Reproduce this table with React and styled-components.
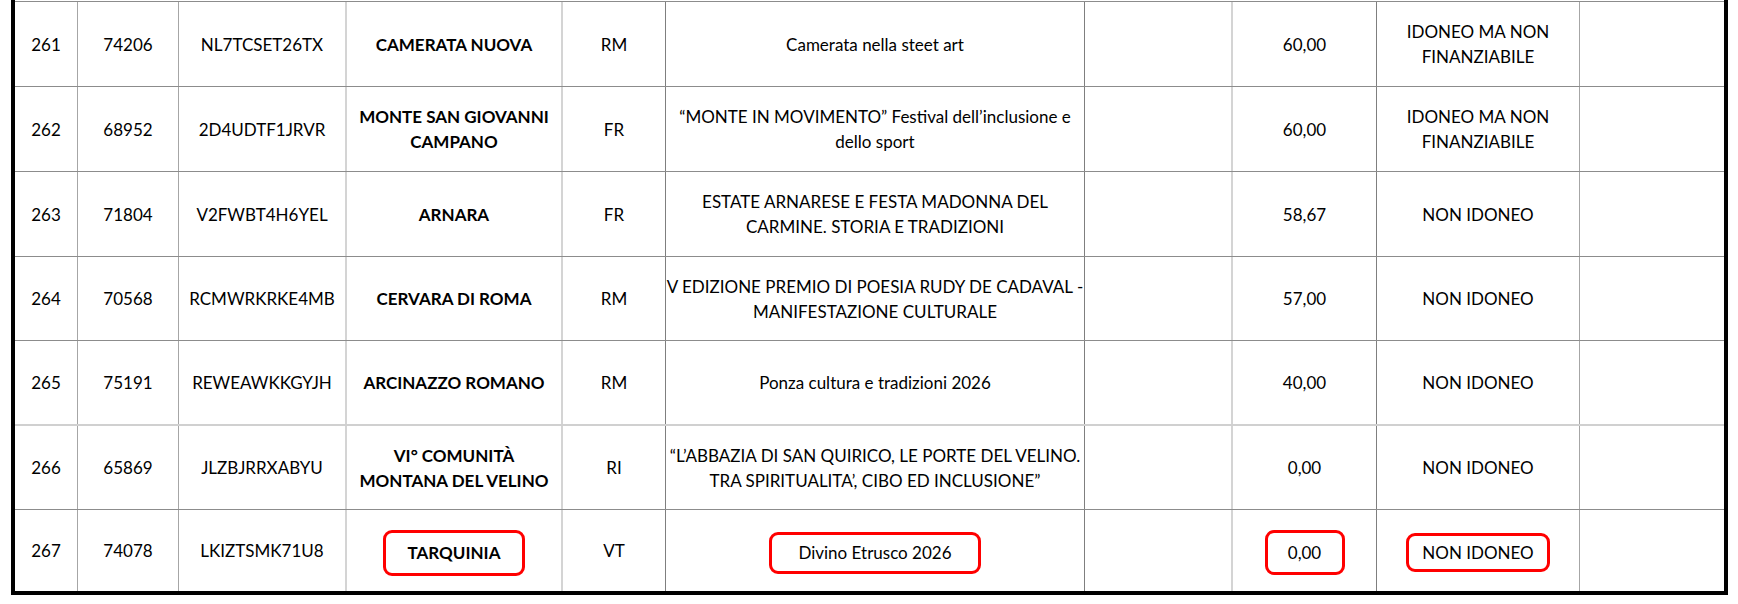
import React from "react";
import styled, { createGlobalStyle, css } from "styled-components";

const GlobalStyle = createGlobalStyle`
  html, body {
    margin: 0;
    padding: 0;
    background: #ffffff;
  }
  body {
    font-family: Lato, "Open Sans", "Liberation Sans", sans-serif;
    color: #000000;
  }
`;

// column widths include the left grid line of each cell
const columns = [
  { width: 62, line: "none" },
  { width: 101, line: "mid" },
  { width: 167, line: "mid" },
  { width: 216, line: "light" },
  { width: 104, line: "light" },
  { width: 419, line: "dark" },
  { width: 147, line: "dark" },
  { width: 145, line: "light" },
  { width: 203, line: "dark" },
  { width: 145, line: "mid" },
];

const lines = {
  none: css`
    border-left: 0;
  `,
  dark: css`
    border-left: 1px solid #7f7f7f;
  `,
  mid: css`
    border-left: 1px solid #a6a6a6;
  `,
  light: css`
    border-left: 2px solid #d4d4d4;
  `,
};

const rows = [
  {
    height: 85,
    cells: ["261", "74206", "NL7TCSET26TX", ["CAMERATA NUOVA"], "RM",
      ["Camerata nella steet art"], "", "60,00", ["IDONEO MA NON", "FINANZIABILE"], ""],
  },
  {
    height: 85,
    cells: ["262", "68952", "2D4UDTF1JRVR", ["MONTE SAN GIOVANNI", "CAMPANO"], "FR",
      ["\u201CMONTE IN MOVIMENTO\u201D Festival dell\u2019inclusione e", "dello sport"], "", "60,00",
      ["IDONEO MA NON", "FINANZIABILE"], ""],
  },
  {
    height: 85,
    cells: ["263", "71804", "V2FWBT4H6YEL", ["ARNARA"], "FR",
      ["ESTATE ARNARESE E FESTA MADONNA DEL", "CARMINE. STORIA E TRADIZIONI"], "", "58,67",
      ["NON IDONEO"], ""],
  },
  {
    height: 84,
    cells: ["264", "70568", "RCMWRKRKE4MB", ["CERVARA DI ROMA"], "RM",
      ["V EDIZIONE PREMIO DI POESIA RUDY DE CADAVAL -", "MANIFESTAZIONE CULTURALE"], "", "57,00",
      ["NON IDONEO"], ""],
  },
  {
    height: 84,
    cells: ["265", "75191", "REWEAWKKGYJH", ["ARCINAZZO ROMANO"], "RM",
      ["Ponza cultura e tradizioni 2026"], "", "40,00", ["NON IDONEO"], ""],
  },
  {
    height: 85,
    soft: true,
    cells: ["266", "65869", "JLZBJRRXABYU", ["VI\u00B0 COMUNIT\u00C0", "MONTANA DEL VELINO"], "RI",
      ["\u201CL\u2019ABBAZIA DI SAN QUIRICO, LE PORTE DEL VELINO.", "TRA SPIRITUALITA\u2019, CIBO ED INCLUSIONE\u201D"],
      "", "0,00", ["NON IDONEO"], ""],
  },
  {
    height: 82,
    cells: ["267", "74078", "LKIZTSMK71U8",
      { mark: [142, 46], text: ["TARQUINIA"] }, "VT",
      { mark: [212, 42], text: ["Divino Etrusco 2026"] }, "",
      { mark: [80, 45], text: "0,00" },
      { mark: [144, 39], text: ["NON IDONEO"] }, ""],
  },
];

export default function App() {
  return (
    <>
      <GlobalStyle />
      <Sheet>
        {rows.map((row, r) => (
          <Row key={r} $height={row.height} $soft={row.soft}>
            {row.cells.map((cell, c) => (
              <Cell
                key={c}
                $line={columns[c].line}
                $bold={c === 3}
              >
                {renderCell(cell)}
              </Cell>
            ))}
          </Row>
        ))}
      </Sheet>
    </>
  );
}

function renderText(value) {
  if (Array.isArray(value)) {
    return value.map((l, i) => <Line key={i}>{l}</Line>);
  }
  return value;
}

function renderCell(cell) {
  if (cell && cell.mark) {
    return (
      <Mark $w={cell.mark[0]} $h={cell.mark[1]}>
        {renderText(cell.text)}
      </Mark>
    );
  }
  return renderText(cell);
}

const Sheet = styled.div`
  margin-left: 11px;
  width: 1709px;
  padding-top: 1px;
  border-left: 4px solid #000;
  border-right: 4px solid #000;
  border-bottom: 4px solid #000;
`;

const Row = styled.div`
  display: grid;
  grid-template-columns: ${columns.map((c) => c.width + "px").join(" ")};
  height: ${(p) => p.$height}px;
  box-sizing: border-box;
  border-top: ${(p) => (p.$soft ? "2px solid #d0d0d0" : "1px solid #8c8c8c")};
`;

const Cell = styled.div`
  box-sizing: border-box;
  ${(p) => lines[p.$line]}
  display: flex;
  flex-direction: column;
  align-items: center;
  justify-content: center;
  text-align: center;
  font-size: 17px;
  line-height: 25px;
  font-weight: ${(p) => (p.$bold ? 700 : 400)};
  white-space: nowrap;
`;

const Line = styled.span`
  display: block;
`;

const Mark = styled.span`
  box-sizing: border-box;
  display: flex;
  flex-direction: column;
  align-items: center;
  justify-content: center;
  width: ${(p) => p.$w}px;
  height: ${(p) => p.$h}px;
  margin-top: 4px;
  border: 3px solid #ff0000;
  border-radius: 9px;
`;
